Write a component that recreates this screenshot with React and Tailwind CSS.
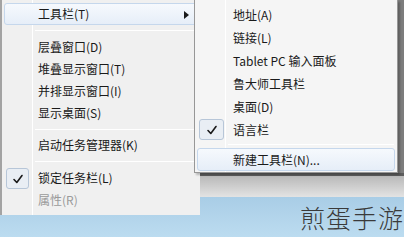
import React from "react";

const font = { fontFamily: '"Noto Sans CJK SC", "Noto Sans", sans-serif' };

function Check() {
  return (
    <svg width="12" height="12" viewBox="0 0 12 12">
      <path d="M2 6.5 L4.8 9.5 L10 2.5" fill="none" stroke="#1a1a1a" strokeWidth="1.6" strokeLinecap="round" strokeLinejoin="round" />
    </svg>
  );
}

function Item({ label, checked, disabled, hot, arrow, h = "h-[22px]", textX = "pl-[33px]", checkW = "w-[23px]" }) {
  return (
    <div className={`relative flex items-center ${h} ${textX} mx-[2px] rounded-[3px] ${hot ? "border border-[#c5d7ec] bg-gradient-to-b from-[#f6f9fd] to-[#e6eef8]" : "border border-transparent"}`}>
      {checked && (
        <div className={`absolute left-[1px] top-[0px] ${checkW} h-[21px] rounded-[3px] border border-[#b7c6d8] bg-[#e9eef4] flex items-center justify-center`}>
          <Check />
        </div>
      )}
      <span className={`text-[12px] leading-none ${disabled ? "text-[#9a9a9a]" : "text-[#1a1a1a]"}`}>{label}</span>
      {arrow && (
        <svg className="absolute right-[8px] top-[7px]" width="5" height="8" viewBox="0 0 5 8">
          <path d="M0 0 L5 4 L0 8 Z" fill="#1a1a1a" />
        </svg>
      )}
    </div>
  );
}

function Sep({ left = "ml-[33px]", h = "h-[11px]" }) {
  return (
    <div className={`${h} flex items-center ${left} mr-[3px]`}>
      <div className="h-[1px] w-full bg-[#d9d9d9] border-b border-white" />
    </div>
  );
}

export default function App() {
  return (
    <div className="relative w-[404px] h-[237px] overflow-hidden flex flex-col" style={font}>
      <div className="h-[173px] bg-[#7d7d7d]" />
      <div className="h-[24px] border-t-[3px] border-[#5d5d5d] bg-gradient-to-b from-[#b9b9b9] to-[#e3e3e3]" />
      <div className="flex-1 bg-gradient-to-b from-[#a9cde6] to-[#bcdcf0] flex justify-end items-start">
        <span className="text-[25px] leading-none text-[#3a3a3a] mr-[0px] mt-[8px] tracking-[1px]" style={{ fontWeight: 300 }}>煎蛋手游</span>
      </div>

      {/* main menu */}
      <div className="absolute left-0 top-0 w-[200px] h-[215px] bg-[#f0f0f0] border-l-[2px] border-[#a3a3a3] pt-[3px]">
        <div className="absolute left-[30px] top-0 bottom-0 w-[1px] bg-[#e2e3e3] border-r border-white" />
        <div className="relative">
          <Item label="工具栏(T)" hot arrow />
          <Sep />
          <Item label="层叠窗口(D)" />
          <Item label="堆叠显示窗口(T)" />
          <Item label="并排显示窗口(I)" />
          <Item label="显示桌面(S)" />
          <Sep h="h-[10px]" />
          <Item label="启动任务管理器(K)" />
          <Sep />
          <Item label="锁定任务栏(L)" checked />
          <Item label="属性(R)" disabled />
        </div>
      </div>

      {/* submenu */}
      <div className="absolute left-[194px] top-0 w-[204px] h-[173px] bg-[#f5f5f5] border border-[#979797] border-t-0 shadow-[2px_2px_2px_rgba(0,0,0,0.25)] pt-[3px]">
        <div className="absolute left-[30px] top-0 bottom-0 w-[1px] bg-[#e2e3e3] border-r border-white" />
        <div className="relative">
          <Item label="地址(A)" h="h-[23px]" textX="pl-[35px]" />
          <Item label="链接(L)" h="h-[23px]" textX="pl-[35px]" />
          <Item label="Tablet PC 输入面板" h="h-[23px]" textX="pl-[35px]" />
          <Item label="鲁大师工具栏" h="h-[23px]" textX="pl-[35px]" />
          <Item label="桌面(D)" h="h-[23px]" textX="pl-[35px]" />
          <Item label="语言栏" h="h-[23px]" textX="pl-[35px]" checked checkW="w-[25px]" />
          <Sep left="ml-[33px]" h="h-[7px]" />
          <Item label="新建工具栏(N)..." h="h-[23px]" textX="pl-[35px]" hot />
        </div>
      </div>
    </div>
  );
}
